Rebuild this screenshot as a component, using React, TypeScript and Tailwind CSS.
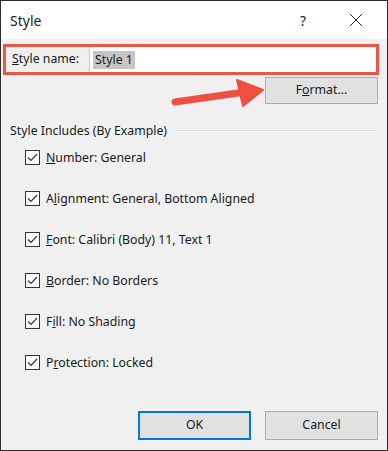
import React from 'react';

const items = [
  { u: 'N', rest: 'umber: General', pre: '' },
  { pre: 'A', u: 'l', rest: 'ignment: General, Bottom Aligned' },
  { pre: '', u: 'F', rest: 'ont: Calibri (Body) 11, Text 1' },
  { pre: '', u: 'B', rest: 'order: No Borders' },
  { pre: 'F', u: 'i', rest: 'll: No Shading' },
  { pre: 'P', u: 'r', rest: 'otection: Locked' },
];

const Check = () => (
  <div className="w-[15px] h-[15px] border border-[#333] bg-white flex items-center justify-center shrink-0">
    <svg width="11" height="9" viewBox="0 0 11 9">
      <path d="M1 4.5 L4 7.5 L10 1" fill="none" stroke="#333" strokeWidth="1.2" />
    </svg>
  </div>
);

export default function App() {
  return (
    <div
      className="w-[388px] h-[451px] border border-[#2b2b2b] bg-[#f0f0f0] flex flex-col text-[12.3px] text-[#1a1a1a] overflow-hidden"
      style={{ fontFamily: '"Noto Sans", "Open Sans", sans-serif' }}
    >
      {/* title bar */}
      <div className="h-[38px] bg-white flex items-center shrink-0">
        <span className="ml-[9px] text-[14px] flex-1">Style</span>
        <span className="w-[20px] text-center text-[14px] mr-[36px]">?</span>
        <svg width="14" height="14" viewBox="0 0 14 14" className="mr-[24px]">
          <path d="M1 1 L13 13 M13 1 L1 13" stroke="#222" strokeWidth="1" />
        </svg>
      </div>

      {/* style name row */}
      <div className="mt-[5px] ml-[2px] mr-[8px] h-[31px] border-[3px] border-[#ea5648] flex items-stretch">
        <div className="w-[83px] flex items-center pl-[6px]">
          <span><span className="underline">S</span>tyle name:</span>
        </div>
        <div className="flex-1 bg-white border-l border-[#c8c8c8] flex items-center pl-[3px]">
          <span className="bg-[#c6c6c6] px-[2px] leading-[18px]">Style 1</span>
        </div>
      </div>

      {/* format button + arrow */}
      <div className="relative h-[30px] flex justify-end pr-[9px] pt-[2px]">
        <svg className="absolute left-[168px] top-[0px]" width="100" height="36" viewBox="0 0 100 36">
          <path d="M6 27 L76 17" stroke="#ee4f40" strokeWidth="7" strokeLinecap="round" />
          <path d="M68 5 L94 15 L74 31 Z" fill="#ee4f40" stroke="#ee4f40" strokeWidth="2" strokeLinejoin="round" />
        </svg>
        <div className="w-[113px] h-[27px] bg-[#e1e1e1] border border-[#adadad] flex items-center justify-center">
          F<span className="underline">o</span>rmat...
        </div>
      </div>

      {/* group header */}
      <div className="mt-[17px] flex items-center pl-[9px] pr-[9px]">
        <span>Style Includes (By Example)</span>
        <div className="flex-1 ml-[8px] h-[2px] border-t border-[#dcdcdc] border-b border-b-white" />
      </div>

      {/* checkbox list */}
      <div className="flex flex-col gap-[22px] pl-[24px] mt-[8px]">
        {items.map((it, i) => (
          <div key={i} className="flex items-center h-[19px] gap-[6px]">
            <Check />
            <span>
              {it.pre}
              <span className="underline">{it.u}</span>
              {it.rest}
            </span>
          </div>
        ))}
      </div>

      {/* buttons */}
      <div className="mt-auto mb-[10px] flex justify-end gap-[14px] pr-[9px]">
        <div className="w-[113px] h-[29px] bg-[#e1e1e1] border-2 border-[#0078d7] flex items-center justify-center">
          OK
        </div>
        <div className="w-[113px] h-[29px] bg-[#e1e1e1] border border-[#adadad] flex items-center justify-center">
          Cancel
        </div>
      </div>
    </div>
  );
}
